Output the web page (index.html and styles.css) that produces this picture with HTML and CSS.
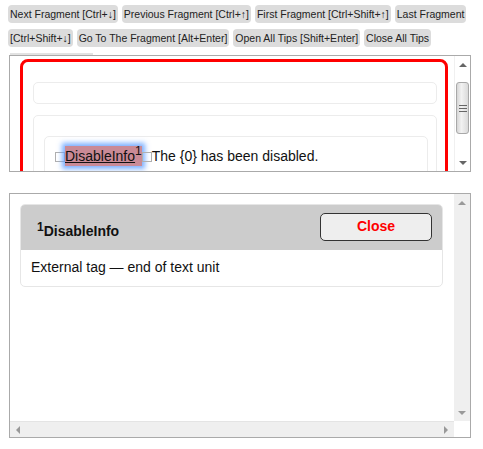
FILE: index.html
```html
<!DOCTYPE html>
<html>
<head>
<meta charset="utf-8">
<link rel="stylesheet" href="styles.css">
</head>
<body>
<div class="toolbar"><span class="btn">Next Fragment [Ctrl+↓]</span> <span class="btn">Previous Fragment [Ctrl+↑]</span> <span class="btn">First Fragment [Ctrl+Shift+↑]</span> <span class="btn">Last Fragment [Ctrl+Shift+↓]</span> <span class="btn">Go To The Fragment [Alt+Enter]</span> <span class="btn">Open All Tips [Shift+Enter]</span> <span class="btn">Close All Tips</span></div>
<div class="tabline"></div>
<div class="pane top-pane">
  <div class="pane-content">
    <div class="frame">
      <div class="box box-empty"></div>
      <div class="box box-outer">
        <div class="box box-inner">
          <div class="segment"><span class="tag"></span><span class="hl"><span class="hl-text">DisableInfo</span><sup class="hl-sup">1</sup></span><span class="tag"></span>The {0} has been disabled.</div>
        </div>
      </div>
    </div>
  </div>
  <div class="vscroll">
    <div class="arrow up"></div>
    <div class="track">
      <div class="thumb"><span class="grip"></span><span class="grip"></span><span class="grip"></span></div>
    </div>
    <div class="arrow down"></div>
  </div>
</div>
<div class="pane bottom-pane">
  <div class="pane-content">
    <div class="card">
      <div class="card-head">
        <div class="card-title"><sup class="title-sup">1</sup>DisableInfo</div>
        <button class="close-btn">Close</button>
      </div>
      <div class="card-body">External tag — end of text unit</div>
    </div>
  </div>
  <div class="vscroll grey">
    <div class="arrow up"></div>
    <div class="track"></div>
    <div class="arrow down"></div>
  </div>
  <div class="hscroll">
    <div class="arrow left"></div>
    <div class="track"></div>
    <div class="arrow right"></div>
  </div>
  <div class="corner"></div>
</div>
</body>
</html>
```

FILE: styles.css
```css
* { box-sizing: border-box; }
html, body { background: #fff; }
body {
  margin: 0 8px 0 8px;
  font-family: "Liberation Sans", Arial, sans-serif;
  color: #222;
}
.toolbar {
  padding-top: 2px;
  font-size: 10.5px;
  line-height: 24px;
  color: #222;
  width: 467px;
}
.btn {
  background: #dcdcdc;
  border-radius: 4px;
  padding: 3px 2px 3px;
  margin-right: 1px;
  -webkit-box-decoration-break: clone;
  box-decoration-break: clone;
}
.tabline {
  margin: 3px 0 0 2px;
  width: 83px;
  height: 2px;
  background: #e2e2e2;
}
.pane {
  border: 1px solid #aaa;
  margin-left: 1px;
  width: 462px;
  background: #fff;
  overflow: hidden;
}
.top-pane {
  height: 117px;
  display: flex;
}
.pane-content {
  flex: 1;
  overflow: hidden;
  min-width: 0;
}
.frame {
  margin: 3px 6px 0 10px;
  border: 3px solid #ff0000;
  border-radius: 8px;
  padding: 20px 8px 0 10px;
  height: 200px;
}
.box {
  border: 1px solid #ececec;
  border-radius: 5px;
}
.box-empty {
  height: 22px;
  margin-bottom: 11px;
}
.box-outer {
  padding: 20px 8px 20px 10px;
}
.box-inner {
  padding: 10px 10px;
}
.segment {
  font-size: 14px;
  line-height: 18px;
  color: #111;
  white-space: nowrap;
}
.tag {
  display: inline-block;
  width: 10px;
  height: 10px;
  border: 1px solid #b0b0b0;
  vertical-align: -1px;
}
.hl {
  background: #c98a96;
  box-shadow: 0 0 5px 3px rgba(90, 155, 255, 0.8);
  padding: 2px 0 2px;
}
.hl-text { text-decoration: underline; }
.hl-sup {
  font-size: 12px;
  vertical-align: 6px;
  line-height: 0;
}
.vscroll {
  width: 16px;
  display: flex;
  flex-direction: column;
  background: #fff;
  border-left: 1px solid #f0f0f0;
}
.vscroll.grey { background: #efefef; border-left: none; }
.vscroll .track { flex: 1; position: relative; }
.arrow {
  height: 17px;
  display: flex;
  align-items: center;
  justify-content: center;
  flex: none;
}
.arrow::before {
  content: "";
  width: 0;
  height: 0;
  border: 4px solid transparent;
}
.arrow.up::before { border-bottom: 4px solid #666; border-top: none; }
.arrow.down::before { border-top: 4px solid #666; border-bottom: none; }
.grey .arrow.up::before, .grey .arrow.down::before { border-top-color: #999; border-bottom-color: #999; }
.thumb {
  margin: 9px 1px 0 1px;
  height: 52px;
  border: 1px solid #a8a8a8;
  border-radius: 3px;
  background: linear-gradient(to right, #d6d6d6, #f2f2f2 40%, #dadada);
  display: flex;
  flex-direction: column;
  align-items: center;
  justify-content: center;
  gap: 2px;
}
.grip {
  width: 8px;
  height: 1px;
  background: #666;
}
.bottom-pane {
  margin-top: 21px;
  height: 245px;
  display: grid;
  grid-template-columns: 1fr 16px;
  grid-template-rows: 1fr 16px;
}
.bottom-pane .pane-content { grid-column: 1; grid-row: 1; }
.bottom-pane .vscroll { grid-column: 2; grid-row: 1; }
.hscroll {
  grid-column: 1;
  grid-row: 2;
  background: #efefef;
  display: flex;
  border-top: 1px solid #e4e4e4;
}
.hscroll .track { flex: 1; }
.hscroll .arrow { width: 16px; height: auto; }
.arrow.left::before { border-right: 4px solid #999; border-left: none; }
.arrow.right::before { border-left: 4px solid #999; border-right: none; }
.corner { grid-column: 2; grid-row: 2; background: #fff; }
.card {
  margin: 10px 11px 0 10px;
  border: 1px solid #e6e6e6;
  border-radius: 5px;
  overflow: hidden;
}
.card-head {
  background: #cccccc;
  height: 45px;
  display: flex;
  align-items: center;
  justify-content: space-between;
  padding: 0 10px 0 16px;
}
.card-title {
  font-size: 14px;
  font-weight: bold;
  color: #111;
  padding-top: 6px;
}
.title-sup {
  font-size: 12px;
  vertical-align: 5px;
  line-height: 0;
}
.close-btn {
  width: 112px;
  height: 28px;
  border: 1px solid #333;
  border-radius: 5px;
  background: #eeeeee;
  color: #ff0000;
  font-family: "Liberation Sans", Arial, sans-serif;
  font-weight: bold;
  font-size: 14px;
  padding: 0 0 2px;
  margin-top: -2px;
}
.card-body {
  font-size: 14px;
  line-height: 16px;
  padding: 9px 10px 11px;
  color: #111;
}
```
